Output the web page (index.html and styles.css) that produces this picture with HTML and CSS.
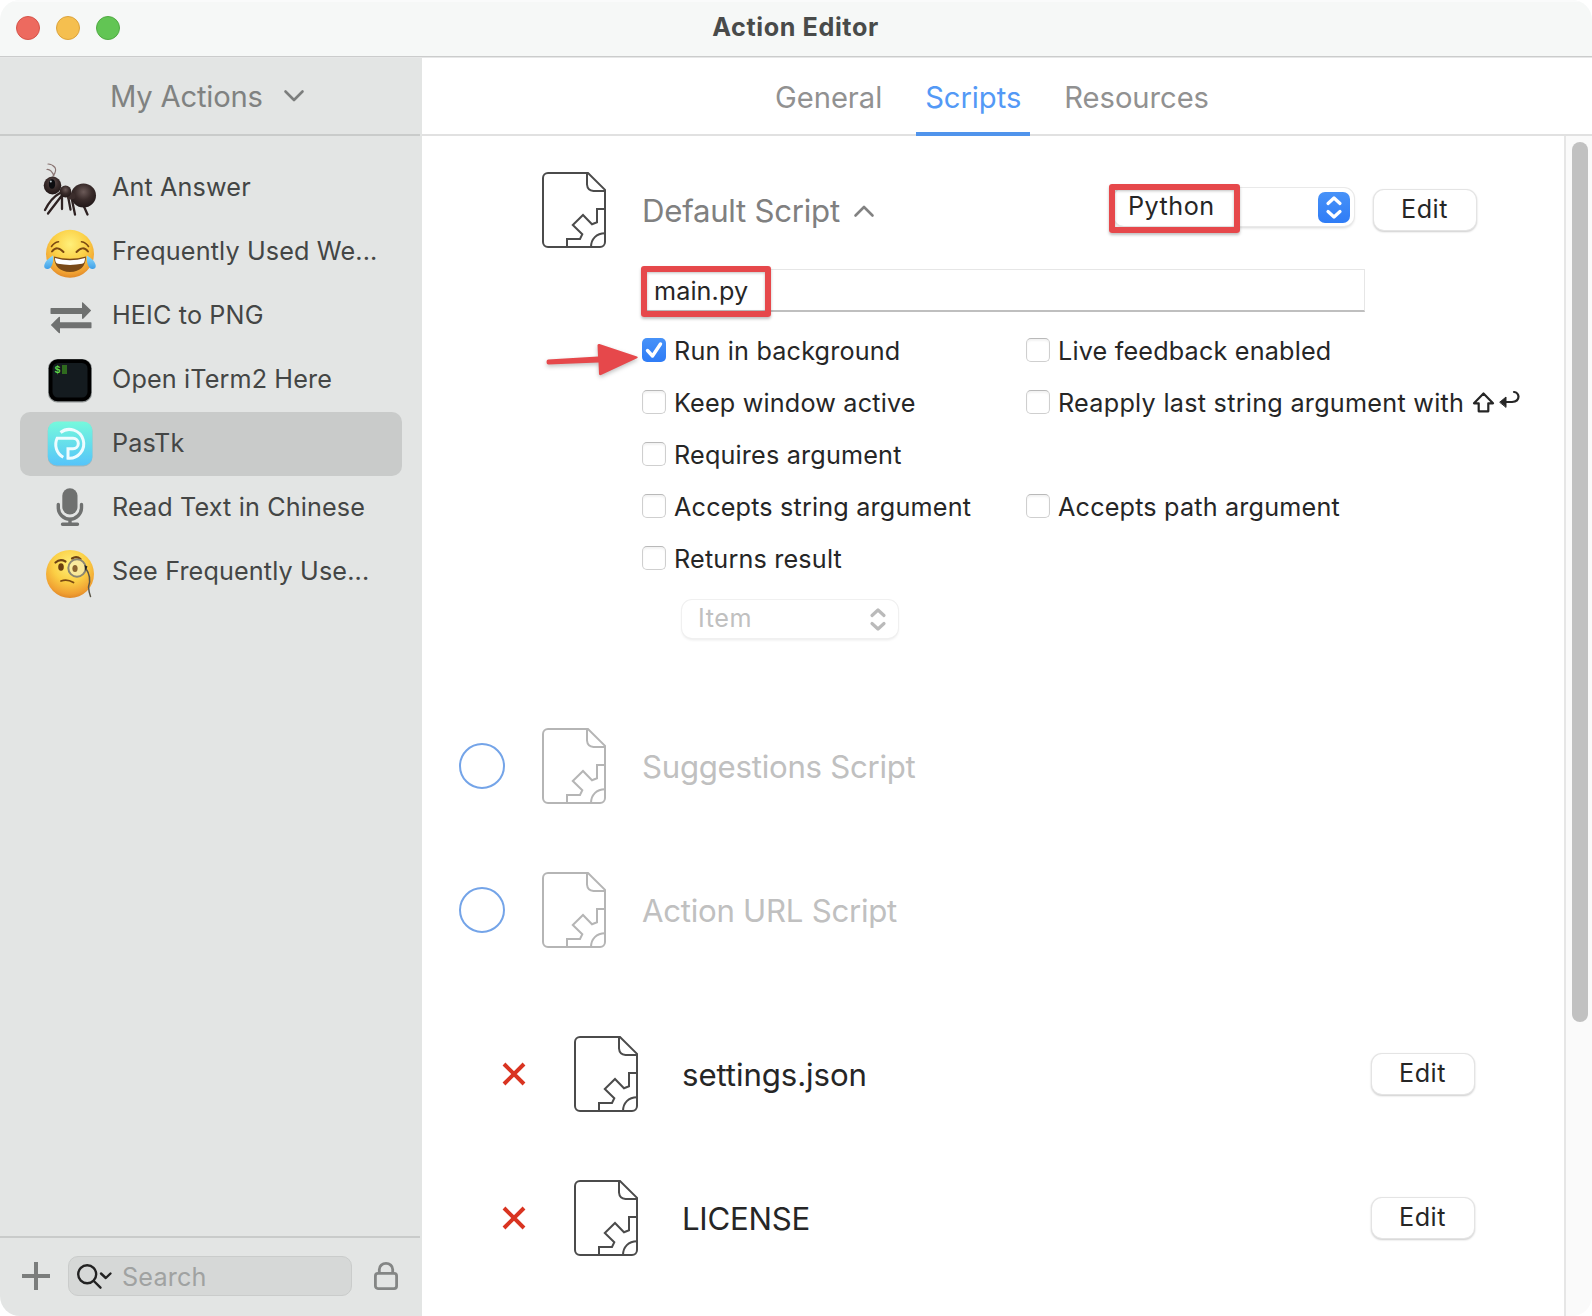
FILE: index.html
```html
<!DOCTYPE html>
<html lang="en">
<head>
<meta charset="utf-8">
<title>Action Editor</title>
<link rel="stylesheet" href="styles.css">
</head>
<body>
<svg class="defs" aria-hidden="true">
  <defs>
    <symbol id="script-file" viewBox="0 0 64 76">
      <g fill="none" stroke="currentColor" stroke-width="2">
        <path d="M6 1H46L63 17.800V70a5 5 0 0 1-5 5H6a5 5 0 0 1-5-5V6a5 5 0 0 1 5-5z"/>
        <path d="M45 1V12.500Q45.500 18.500 51.500 19H63"/>
        <path d="M63 37H55V50.300L50 52.300L41 43L30.800 53L40.300 62.300L38 67H25V75"/>
        <path d="M49 75C49 67 54.500 61.200 63 61.200"/>
      </g>
    </symbol>
    <radialGradient id="face" cx=".5" cy=".3" r=".72">
      <stop offset="0" stop-color="#fff07a"/><stop offset=".5" stop-color="#fbcf45"/><stop offset=".85" stop-color="#f0a032"/><stop offset="1" stop-color="#dd8426"/>
    </radialGradient>
    <radialGradient id="antbody" cx=".5" cy=".35" r=".6">
      <stop offset="0" stop-color="#6b5a58"/><stop offset=".55" stop-color="#3a2c2b"/><stop offset="1" stop-color="#241a1a"/>
    </radialGradient>
    <linearGradient id="pastk" x1="0" y1="0" x2="0" y2="1">
      <stop offset="0" stop-color="#76f9dc"/><stop offset="1" stop-color="#56c4fa"/>
    </linearGradient>
    <linearGradient id="tear" x1="0" y1="0" x2="0" y2="1">
      <stop offset="0" stop-color="#8fdcfc"/><stop offset="1" stop-color="#3f9fe8"/>
    </linearGradient>
  </defs>
</svg>

<div class="window">
  <header class="titlebar">
    <div class="lights"><span class="light close"></span><span class="light minimize"></span><span class="light zoom"></span></div>
    <h1 class="title">Action Editor</h1>
  </header>

  <div class="body">
    <aside class="sidebar">
      <div class="group">
        <span class="group-name">My Actions</span>
        <svg class="chevron" viewBox="0 0 20 12"><path d="M1.500 1.500L10 10L18.500 1.500"/></svg>
      </div>
      <ul class="actions">
        <li class="action">
          <svg class="action-icon" viewBox="0 0 56 64">
            <g fill="none" stroke-linecap="round">
              <path d="M11 20Q15 15 13 11.500Q10 8 6 8M12 20Q9 13 5 13.500" stroke="#8a7472" stroke-width="1.200"/>
              <path d="M18 37Q9 42 3 54M21 38L6 57.500M20 38.500V53M26 40L28.500 53.500M29 39L33 58.500M40 46L45.500 58.500" stroke="#2e2222" stroke-width="2.300"/>
            </g>
            <ellipse cx="41.500" cy="39.500" rx="12.500" ry="12" fill="url(#antbody)"/>
            <ellipse cx="29" cy="40" rx="4.500" ry="3.500" fill="#3b2d2c"/>
            <ellipse cx="23.500" cy="35.500" rx="5.800" ry="6" fill="url(#antbody)"/>
            <ellipse cx="10.500" cy="29.500" rx="8.800" ry="9" fill="url(#antbody)"/>
            <ellipse cx="10" cy="28" rx="3.200" ry="4.800" fill="#0d0d10"/>
            <circle cx="8.800" cy="25.500" r="1" fill="#b9c4cc"/>
          </svg>
          <span class="action-name">Ant Answer</span>
        </li>
        <li class="action">
          <svg class="action-icon" viewBox="0 0 56 64">
            <circle cx="28" cy="33.800" r="24" fill="url(#face)"/>
            <g fill="none" stroke="#7b4a12" stroke-linecap="round">
              <path d="M10 31.500Q15 25 21.500 32M34.500 32Q41 25 46 31.500" stroke-width="2"/>
              <path d="M9.500 26.500Q12 22.500 16.500 21.800M39.500 21.800Q44 22.500 46.500 26.500" stroke-width="1.600"/>
            </g>
            <path d="M12 36.500Q28 41 44 36.500Q43.500 51.500 28 52Q12.500 51.500 12 36.500z" fill="#7a4a17"/>
            <path d="M13 38Q28 42.500 43 38Q43 43.500 40 43.800Q28 46 16 43.800Q13 43.500 13 38z" fill="#fff"/>
            <path d="M11 35.500C12 41 10 49.500 5 49C0 48.500 1.500 41 11 35.500zM45 35.500C44 41 46 49.500 51 49C56 48.500 54.500 41 45 35.500z" fill="url(#tear)"/>
          </svg>
          <span class="action-name">Frequently Used We...</span>
        </li>
        <li class="action">
          <svg class="action-icon" viewBox="0 0 56 64">
            <path d="M9 24H40V18.500Q40.600 18 41.500 19L49.200 26.500L41.500 34.500Q40.600 35.300 40 34.500V30H9Q8.500 30 8.500 29.300V24.700Q8.500 24 9 24zM49 38.200H18V33Q17.200 32.500 16.500 33.300L8.800 41L16.500 48.700Q17.200 49.500 18 49V44.300H49Q49.500 44.300 49.500 43.600V38.900Q49.500 38.200 49 38.200z" fill="#6f7170"/>
          </svg>
          <span class="action-name">HEIC to PNG</span>
        </li>
        <li class="action">
          <svg class="action-icon" viewBox="0 0 56 64">
            <rect x="6" y="11" width="44" height="43.500" rx="9.500" fill="#8f9494"/>
            <rect x="6.800" y="11.300" width="42.400" height="42" rx="9" fill="#000"/>
            <rect x="10.500" y="15" width="35" height="34.500" rx="5.500" fill="#141b1f"/>
            <text x="12.500" y="25" class="prompt">$</text>
            <rect x="20" y="17" width="5" height="9" fill="#2f6b1e"/>
          </svg>
          <span class="action-name">Open iTerm2 Here</span>
        </li>
        <li class="action selected">
          <svg class="action-icon" viewBox="0 0 56 64">
            <rect x="5.800" y="10.200" width="44.600" height="44.200" rx="9" fill="#a5b6b8"/>
            <rect x="5.800" y="9.500" width="44.600" height="44" rx="9" fill="url(#pastk)"/>
            <g fill="none" stroke="#eefcff" stroke-width="3">
              <path d="M18.500 20.500A14.400 14.400 0 1 1 26 46.200V36.800H31A5 5 0 0 0 31 26.200H15.200A14.400 14.400 0 0 0 21.300 45.200"/>
            </g>
          </svg>
          <span class="action-name">PasTk</span>
        </li>
        <li class="action">
          <svg class="action-icon" viewBox="0 0 56 64">
            <rect x="20.300" y="12.200" width="15.200" height="26.300" rx="7.600" fill="#6f7170"/>
            <path d="M16.300 28.500V31.500A11.600 11.600 0 0 0 39.500 31.500V28.500M28 43V48M20.500 48.200H35.500" fill="none" stroke="#6f7170" stroke-width="3.400" stroke-linecap="round"/>
          </svg>
          <span class="action-name">Read Text in Chinese</span>
        </li>
        <li class="action">
          <svg class="action-icon" viewBox="0 0 56 64">
            <circle cx="28" cy="34" r="24" fill="url(#face)"/>
            <g fill="none" stroke-linecap="round">
              <path d="M13.500 22.500Q18 18.500 23.500 21.500M30 18.500Q34.500 15.500 38.500 19" stroke="#6e4314" stroke-width="2.200"/>
              <path d="M19 41Q25 38.500 31.500 42.500" stroke="#7b4a12" stroke-width="1.800"/>
              <circle cx="35" cy="28" r="8.700" fill="#f7ecb0" fill-opacity=".75" stroke="#8b8672" stroke-width="2"/>
              <path d="M43.500 28Q50 37 46.500 47Q47 53 48.500 56.500" stroke="#5b5648" stroke-width="1.500"/>
            </g>
            <ellipse cx="19" cy="27" rx="2.800" ry="3.800" fill="#6a3f10"/>
            <ellipse cx="33" cy="28.500" rx="2.600" ry="3.600" fill="#8a6430"/>
            <path d="M42.500 25L45.500 26.500L43.500 31z" fill="#222"/>
          </svg>
          <span class="action-name">See Frequently Use...</span>
        </li>
      </ul>
      <footer class="toolbar">
        <svg class="add" viewBox="0 0 28 28"><path d="M0 14H28M14 0V28"/></svg>
        <div class="search">
          <svg class="search-icon" viewBox="0 0 36 26"><circle cx="10.200" cy="10.300" r="9"/><path d="M16.800 17L23.500 23.700M24 9.500L28.800 14L33.500 9.500"/></svg>
          <span>Search</span>
        </div>
        <svg class="lock" viewBox="0 0 24 28"><rect x="1.400" y="11.400" width="21.200" height="15.200" rx="2.500"/><path d="M5.300 11V7.500A6.700 6.200 0 0 1 18.700 7.500V11"/></svg>
      </footer>
    </aside>

    <main class="main">
      <nav class="tabs">
        <span class="tab">General</span>
        <span class="tab current">Scripts</span>
        <span class="tab">Resources</span>
      </nav>
      <div class="scroller">
        <div class="content">
          <section class="script">
            <div class="script-head">
              <span class="ring-slot"></span>
              <svg class="file"><use href="#script-file"/></svg>
              <h2 class="script-title">Default Script</h2>
              <svg class="chevron up" viewBox="0 0 20 12"><path d="M1.500 10.500L10 2L18.500 10.500"/></svg>
              <div class="select language">
                <span>Python</span>
                <svg class="stepper" viewBox="0 0 32 31"><path d="M10 11.500L16 6L22 11.500M10 19.500L16 25L22 19.500"/></svg>
                <span class="mark mark-language"></span>
              </div>
              <span class="button">Edit</span>
            </div>
            <div class="details">
              <div class="input">main.py<span class="mark mark-file"></span></div>
              <div class="options">
                <label class="option"><span class="box checked"><svg viewBox="0 0 24 24"><path d="M5.500 12.500L10.500 18L18.500 6"/></svg></span><span class="label">Run in background</span>
                  <svg class="arrow" viewBox="0 0 96 36"><path d="M3 17.500L53 14.500L52.500 3Q53 1.500 54.500 2L92 14.500Q93.500 15.300 92 16.200L56 33Q54 33.500 54 32L53.500 20.500L3.500 22.500Q1.500 22.500 1.500 20Q1.500 17.700 3 17.500z"/></svg>
                </label>
                <label class="option"><span class="box"></span><span class="label">Live feedback enabled</span></label>
                <label class="option"><span class="box"></span><span class="label">Keep window active</span></label>
                <label class="option wide"><span class="box"></span><span class="label">Reapply last string argument with</span>
                  <svg class="keys" viewBox="0 0 50 24"><path d="M11.500 3.500L21 13.300H16.300V21.300H6.700V13.300H2z"/><path d="M33 12H40Q46.500 11.500 46.500 6.500Q46 2.500 42 2"/><path class="solid" d="M28 12L34 7V17z"/></svg>
                </label>
                <label class="option full"><span class="box"></span><span class="label">Requires argument</span></label>
                <label class="option"><span class="box"></span><span class="label">Accepts string argument</span></label>
                <label class="option"><span class="box"></span><span class="label">Accepts path argument</span></label>
                <label class="option full"><span class="box"></span><span class="label">Returns result</span></label>
              </div>
              <div class="select result">
                <span>Item</span>
                <svg class="stepper" viewBox="0 0 32 31"><path d="M10 11.500L16 6L22 11.500M10 19.500L16 25L22 19.500"/></svg>
              </div>
            </div>
          </section>

          <section class="script-head disabled">
            <span class="ring-slot"><span class="ring"></span></span>
            <svg class="file"><use href="#script-file"/></svg>
            <h2 class="script-title">Suggestions Script</h2>
          </section>
          <section class="script-head disabled">
            <span class="ring-slot"><span class="ring"></span></span>
            <svg class="file"><use href="#script-file"/></svg>
            <h2 class="script-title">Action URL Script</h2>
          </section>

          <div class="files">
            <div class="file-row">
              <svg class="remove" viewBox="0 0 22 22"><path d="M1 1L21 21M21 1L1 21"/></svg>
              <svg class="file"><use href="#script-file"/></svg>
              <span class="file-name">settings.json</span>
              <span class="button">Edit</span>
            </div>
            <div class="file-row">
              <svg class="remove" viewBox="0 0 22 22"><path d="M1 1L21 21M21 1L1 21"/></svg>
              <svg class="file"><use href="#script-file"/></svg>
              <span class="file-name license">LICENSE</span>
              <span class="button">Edit</span>
            </div>
          </div>
        </div>
        <div class="scrollbar"><div class="thumb"></div></div>
      </div>
    </main>
  </div>
</div>
</body>
</html>
```
FILE: styles.css
```css
* { box-sizing: border-box; }
body { margin: 0; background: #fff; font-family: Inter, "Liberation Sans", sans-serif; font-size: 25.2px; line-height: 32px; letter-spacing: .18px; color: #262626; }
h1, h2, ul { margin: 0; padding: 0; font-weight: 400; list-style: none; }
svg { display: block; flex: none; overflow: visible; }
.defs { width: 0; height: 0; position: absolute; }

.window { width: 1592px; height: 1316px; display: flex; flex-direction: column; overflow: hidden; border-radius: 20px; background: #fff; }

/* Title bar */
.titlebar { display: grid; grid-template-columns: 1fr auto 1fr; align-items: center; height: 58px; padding: 0 16px 2px; background: #f6f8f7; box-shadow: inset 0 -1px #e6e7e7, inset 0 -2px #cbcccc, inset 0 2px #fafbfb; }
.lights { display: flex; gap: 16px; }
.light { width: 24px; height: 24px; border-radius: 50%; border: 1px solid; }
.close { background: #ed6a5f; border-color: #d5544a; }
.minimize { background: #f5bf4f; border-color: #dba33c; }
.zoom { background: #62c554; border-color: #50aa43; }
.title { padding: 0 1px 3px 0; font-size: 25.2px; font-weight: 700; letter-spacing: .59px; color: #494b4a; }

.body { display: flex; flex: 1; min-height: 0; }

/* Sidebar */
.sidebar { display: flex; flex-direction: column; width: 422px; background: #e3e5e4; }
.group { display: flex; align-items: center; gap: 21px; height: 78px; margin-right: 2px; padding-left: 110px; border-bottom: 2px solid #c9cbca; font-size: 29.2px; letter-spacing: -.2px; color: #808281; }
.group-name { padding-top: 2px; }
.chevron { width: 20px; height: 12px; fill: none; stroke: #7c7e7d; stroke-width: 2.6; stroke-linecap: round; stroke-linejoin: round; }
.actions { flex: 1; padding: 20px; }
.action { display: flex; align-items: center; gap: 14px; height: 64px; padding-left: 22px; border-radius: 10px; color: #444645; letter-spacing: .13px; }
.selected { background: #c9cbca; }
.action-icon { width: 56px; height: 64px; }
.action-name { padding-bottom: 3px; white-space: nowrap; }
.prompt { font: 700 10px "Liberation Mono", monospace; fill: #62d84a; letter-spacing: 0; }
.toolbar { display: flex; align-items: center; height: 80px; margin-right: 2px; padding: 0 22px 2px; border-top: 2px solid #c9cbca; }
.add { width: 28px; height: 28px; stroke: #7b7d7c; stroke-width: 4; }
.search { display: flex; align-items: center; gap: 9px; width: 284px; height: 40px; margin: 0 22px 0 18px; padding: 1px 8px 0; border: 1px solid #cacccb; border-radius: 10px; background: #d6d8d7; color: #a0a2a1; }
.search-icon { width: 36px; height: 26px; fill: none; stroke: #222; stroke-width: 2.4; stroke-linecap: round; stroke-linejoin: round; }
.lock { width: 24px; height: 28px; fill: none; stroke: #848685; stroke-width: 2.8; }

/* Tabs */
.main { display: flex; flex-direction: column; flex: 1; min-width: 0; }
.tabs { display: flex; gap: 25px; height: 78px; padding-left: 344px; border-bottom: 2px solid #e1e1e1; font-size: 29.2px; letter-spacing: -.05px; color: #919191; }
.tab { height: 78px; padding: 2px 9px 0; line-height: 76px; }
.current { color: #5399f6; border-bottom: 4px solid #5094ec; }

.scroller { display: flex; flex: 1; min-height: 0; }
.content { flex: 1; padding: 36px 88px 0 37px; }
.scrollbar { width: 28px; padding: 6px 4px 0 6px; border-left: 2px solid #e6e6e6; background: #fafafa; }
.thumb { height: 880px; border-radius: 8px; background: #c1c1c1; }

/* Script sections */
.script { height: 556px; }
.script-head { display: flex; align-items: center; height: 76px; color: #808080; }
.ring-slot { width: 83px; }
.ring { display: block; width: 46px; height: 46px; border: 2px solid #74a4e8; border-radius: 50%; }
.file { width: 64px; height: 76px; color: #4b4b4b; }
.script-title { margin-left: 36px; padding-top: 1px; font-size: 31.2px; letter-spacing: -.27px; }
.up { margin: 2px auto 0 14px; stroke: #828282; }
.disabled { margin-bottom: 68px; color: #c0c0c0; }
.disabled .file { color: #b5b5b5; }

.select { display: flex; justify-content: space-between; position: relative; border-radius: 10px; background: #fff; box-shadow: 0 0 0 1px #e9e9e9, 0 2px 3px rgba(0,0,0,.16); color: #262626; }
.language { width: 240px; height: 38px; margin: 0 20px 6px 0; padding: 2px 4px 0 14px; letter-spacing: .5px; }
.stepper { width: 32px; height: 31px; margin-top: 2px; border-radius: 7px; background: linear-gradient(#4792f8, #2f7cf6); fill: none; stroke: #fff; stroke-width: 3.2; stroke-linecap: round; stroke-linejoin: round; }
.button { display: block; width: 102px; height: 40px; padding: 3px 1px 0 0; border-radius: 10px; background: #fff; box-shadow: 0 0 0 1px #e4e4e4, 0 1px 2px 1px rgba(0,0,0,.2); color: #262626; text-align: center; letter-spacing: .5px; }

.details { width: 723px; margin: 21px 0 0 183px; }
.input { position: relative; height: 43px; padding: 5px 0 0 11px; border: 1px solid #e6e6e6; border-bottom: 2px solid #bfbfbf; letter-spacing: .1px; }
.options { display: grid; grid-template-columns: 384px 480px; grid-auto-rows: 52px; margin-top: 12px; }
.option { display: flex; align-items: center; gap: 8px; position: relative; white-space: nowrap; }
.label { padding-top: 2px; }
.full { grid-column: 1 / -1; }
.wide { letter-spacing: .27px; }
.box { flex: none; width: 24px; height: 24px; border: 1.5px solid #cfcfcf; border-top-color: #b9b9b9; border-radius: 5px; background: #fff; box-shadow: inset 0 2px 2px rgba(0,0,0,.05); }
.checked { border: 0; background: linear-gradient(#4792f8, #2f7cf6); box-shadow: none; }
.checked svg { fill: none; stroke: #fff; stroke-width: 3.4; stroke-linecap: round; stroke-linejoin: round; }
.keys { width: 50px; height: 24px; margin: 0; fill: none; stroke: #262626; stroke-width: 2.2; stroke-linejoin: round; stroke-linecap: round; }
.keys .solid { fill: #262626; stroke-width: 1; }
.result { width: 216px; height: 38px; margin: 16px 0 0 40px; padding: 2px 4px 0 16px; box-shadow: 0 0 0 1px #f0f0f0, 0 2px 3px rgba(0,0,0,.09); color: #c0c0c0; letter-spacing: .6px; }
.result .stepper { background: none; stroke: #bababa; }

/* Files of the action */
.files { display: flex; flex-direction: column; gap: 68px; margin-top: 88px; padding-left: 44px; }
.file-row { display: flex; align-items: center; height: 76px; }
.remove { width: 22px; height: 22px; margin-right: 49px; stroke: #d93421; stroke-width: 4; }
.file-name { margin: 0 auto 0 44px; padding-top: 1px; font-size: 31.2px; letter-spacing: -.08px; }
.license { letter-spacing: -.26px; }
.file-row .button { margin-right: 2px; }

/* Callouts over the form */
.mark { position: absolute; border: 6px solid #e6484b; border-radius: 3px; box-shadow: 0 2px 3px rgba(0,0,0,.25), inset 0 1px 3px rgba(0,0,0,.25); }
.mark-language { left: -5px; top: -4px; width: 131px; height: 49px; }
.mark-file { left: -2px; top: -4px; width: 130px; height: 51px; }
.arrow { position: absolute; left: -97px; top: 18px; width: 96px; height: 36px; fill: #e6484b; filter: drop-shadow(0 2px 2px rgba(0,0,0,.25)); }
```
